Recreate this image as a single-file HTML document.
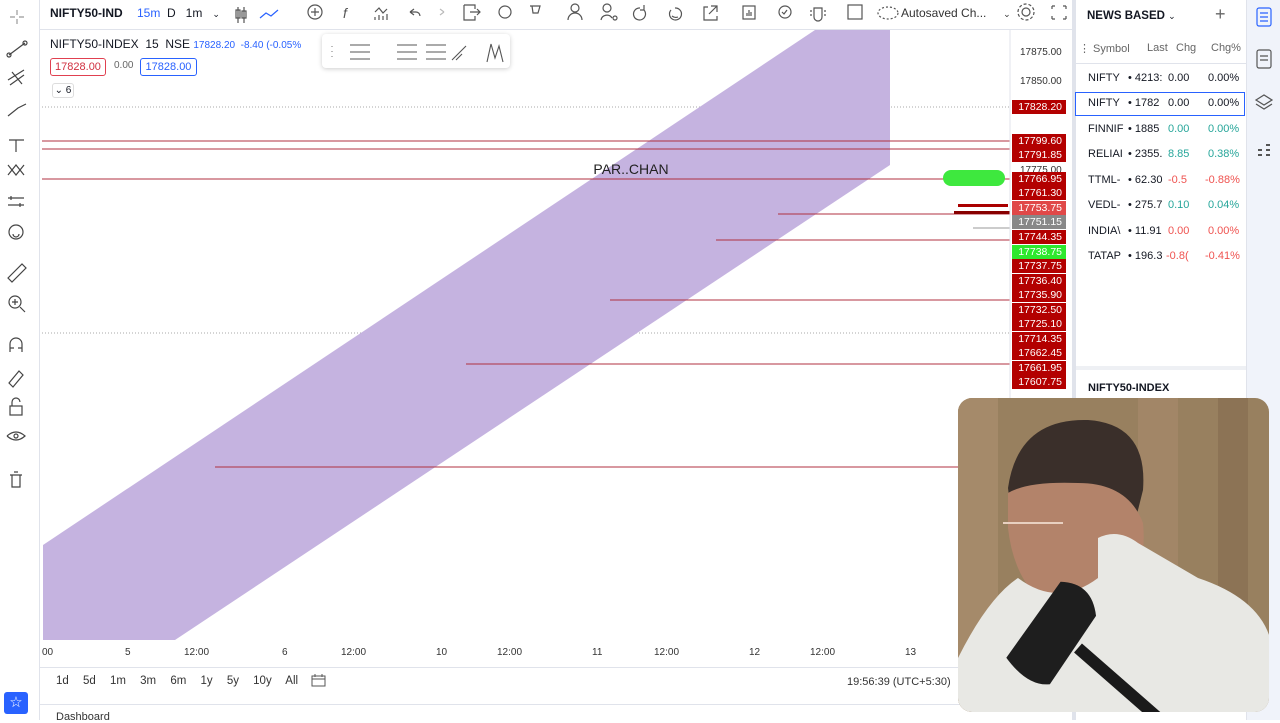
<!DOCTYPE html>
<html><head><meta charset="utf-8"><style>
*{margin:0;padding:0;box-sizing:border-box}
body{width:1280px;height:720px;overflow:hidden;background:#fff;font-family:"Liberation Sans",sans-serif;position:relative;color:#131722}
.a{position:absolute}
.pl{position:absolute;left:1012px;width:54px;height:14px;background:#b30000;color:#fff;font-size:10.5px;line-height:14px;text-align:right;padding-right:4px}
.wr{position:absolute;left:1088px;font-size:11px;height:25px;line-height:25px;width:155px}
.wr span{position:absolute}
</style></head><body>
<!-- top bar -->
<div class="a" style="left:0;top:0;width:1072px;height:30px;border-bottom:1px solid #e0e3eb;background:#fff"></div>
<div class="a" style="left:50px;top:6px;font-size:12px;font-weight:bold">NIFTY50-IND</div>
<div class="a" style="left:137px;top:6px;font-size:12px;color:#2962ff">15m</div>
<div class="a" style="left:167px;top:6px;font-size:12px">D&nbsp;&nbsp;&nbsp;1m&nbsp;&nbsp;&nbsp;<span style="font-size:9px">⌄</span></div>
<svg class="a" style="left:230px;top:0" width="850" height="30" fill="none" stroke="#555" stroke-width="1.2">
<path d="M8 7v16M14 7v16M6 10h4v8H6zM12 11h4v7h-4z"/><path d="M30 18l6-5 5 3 7-6" stroke="#2962ff"/>
<circle cx="85" cy="12" r="7"/><path d="M85 8v8M81 12h8"/>
<text x="113" y="18" font-size="14" fill="#555" stroke="none" font-style="italic">f</text>
<path d="M145 12l4-4 4 5 4-4M145 20v-3M149 20v-5M153 20v-4M157 20v-6"/>
<path d="M180 12l4-3M180 12l4 3M180 12h6a4 4 0 0 1 4 4"/><path d="M214 12l-4-3M214 12l-4 3" stroke="#bbb"/>
<path d="M234 5h11v4M234 5v15h11v-4M240 12h10M247 9l3 3-3 3"/>
<circle cx="275" cy="12" r="6"/><path d="M302 6h8l-2 7h-5zM300 6h2"/>
<circle cx="345" cy="8" r="4"/><path d="M338 20a7 7 0 0 1 14 0"/>
<circle cx="377" cy="8" r="4"/><path d="M371 20a6 6 0 0 1 11-2"/><circle cx="385" cy="18" r="2"/>
<path d="M410 8a6 6 0 1 0 4 2M414 5v5h-4"/><path d="M445 8a6 6 0 1 1-4 2M442 16a6 6 0 0 0 6 1"/>
<path d="M478 7h-4v13h13v-4M481 6h6v6M487 6l-8 8"/>
<rect x="513" y="6" width="12" height="13"/><path d="M517 16v-3M519 16v-6M521 16v-4"/>
<circle cx="555" cy="12" r="6"/><path d="M552 12l2 2 3-4"/>
<path d="M584 8h8v9a4 4 0 0 1-8 0zM582 11h-2M594 11h2M582 15h-2M594 15h2"/>
<rect x="618" y="5" width="14" height="14"/>
<ellipse cx="658" cy="13" rx="10" ry="6" stroke-dasharray="2 2"/>
<circle cx="796" cy="12" r="4"/><circle cx="796" cy="12" r="8" stroke-dasharray="3 2"/>
<path d="M822 6h3M822 6v3M836 6h-3M836 6v3M822 19h3M822 19v-3M836 19h-3M836 19v-3"/>
</svg>
<div class="a" style="left:901px;top:6px;font-size:12px;color:#333">Autosaved Ch...&nbsp;&nbsp;&nbsp;&nbsp;&nbsp;<span style="font-size:9px">⌄</span></div>
<!-- left toolbar -->
<div class="a" style="left:0;top:0;width:40px;height:720px;border-right:1px solid #e0e3eb;background:#fff"></div>
<svg class="a" style="left:0;top:0" width="40" height="500" fill="none" stroke="#444" stroke-width="1.2">
<path d="M17 10v5M17 19v5M10 17h5M19 17h5" stroke="#999"/>
<path d="M9 55l16-12"/><circle cx="9" cy="55" r="2"/><circle cx="25" cy="43" r="2"/>
<path d="M8 80l16-10M10 85l14-10M12 72l10 12"/>
<path d="M8 116l10-8 8-4"/><path d="M9 140h15M16 140v12"/>
<path d="M8 165l8 10 8-10M8 175l8-10 8 10"/><path d="M8 198h16M8 205h16M11 196v4M20 203v4"/>
<circle cx="16" cy="232" r="7"/><path d="M13 234a3 3 0 0 0 6 0"/>
<path d="M8 278l14-14 4 4-14 14z"/><circle cx="15" cy="302" r="6"/><path d="M20 307l5 5M12 302h6M15 299v6"/>
<path d="M10 352v-8a6 6 0 0 1 12 0v8M10 348h4M18 348h4"/><path d="M9 383l10-12 4 4-10 12z"/>
<rect x="10" y="406" width="12" height="9"/><path d="M12 406v-4a4 4 0 0 1 8 0"/>
<path d="M7 436q9-8 18 0q-9 8-18 0"/><circle cx="16" cy="436" r="2"/>
<path d="M10 475h12M12 475v12h8v-12M14 472h4"/>
</svg>
<div class="a" style="left:4px;top:692px;width:24px;height:22px;background:#2962ff;border-radius:3px;color:#fff;text-align:center;font-size:15px;line-height:22px">☆</div>
<!-- chart -->
<svg class="a" style="left:0;top:0" width="1072" height="650">
<line x1="42" y1="107" x2="1010" y2="107" stroke="#aaa" stroke-dasharray="1 2"/>
<line x1="42" y1="333" x2="1010" y2="333" stroke="#aaa" stroke-dasharray="1 2"/>
<polygon points="43,545 815,30 890,30 890,165 175,640 43,640" fill="#c5b3e0"/>
<g stroke="#b03040" stroke-width="1">
<line x1="42" y1="141" x2="1010" y2="141"/><line x1="42" y1="149" x2="1010" y2="149"/><line x1="42" y1="179" x2="1010" y2="179"/>
<line x1="778" y1="214" x2="1010" y2="214"/><line x1="716" y1="240" x2="1010" y2="240"/><line x1="610" y1="300" x2="1010" y2="300"/>
<line x1="466" y1="364" x2="1010" y2="364"/><line x1="215" y1="467" x2="960" y2="467"/>
</g>
<rect x="958" y="204" width="50" height="3" fill="#a00"/><rect x="954" y="211" width="56" height="3" fill="#800"/>
<line x1="973" y1="228" x2="1010" y2="228" stroke="#999"/>
<rect x="943" y="170" width="62" height="16" rx="8" fill="#3ee83e"/>
<text x="631" y="174" text-anchor="middle" font-size="14" fill="#222" font-family="Liberation Sans">PAR..CHAN</text>
<line x1="1010" y1="30" x2="1010" y2="640" stroke="#e0e3eb"/>
</svg>
<div class="a" style="left:50px;top:37px;font-size:12px">NIFTY50-INDEX&nbsp;&nbsp;15&nbsp;&nbsp;NSE <span style="font-size:10px;color:#2962ff">17828.20 &nbsp;-8.40 (-0.05%</span></div>
<div class="a" style="left:50px;top:58px;width:56px;height:18px;border:1px solid #e04050;border-radius:3px;color:#d03040;font-size:11px;line-height:16px;text-align:center">17828.00</div>
<div class="a" style="left:114px;top:60px;font-size:10px;color:#666">0.00</div>
<div class="a" style="left:140px;top:58px;width:57px;height:18px;border:1px solid #2962ff;border-radius:3px;color:#2962ff;font-size:11px;line-height:16px;text-align:center">17828.00</div>
<div class="a" style="left:52px;top:83px;width:22px;height:15px;border:1px solid #ddd;border-radius:3px;font-size:10px;line-height:13px;text-align:center">⌄ 6</div>
<div class="a" style="left:322px;top:34px;width:188px;height:34px;background:#fff;box-shadow:0 1px 5px rgba(0,0,0,.2);border-radius:4px"></div>
<svg class="a" style="left:322px;top:34px" width="188" height="34" fill="none" stroke="#555" stroke-width="1.1">
<path d="M10 12v1M10 17v1M10 22v1" stroke="#bbb" stroke-width="2"/>
<path d="M28 11h20M28 18h20M28 25h20M75 11h20M75 18h20M75 25h20M104 11h20M104 18h20M104 25h20"/>
<path d="M130 26l14-14M134 26l6-6"/><path d="M165 28l4-18 4 14 4-12 4 16"/>
</svg>
<div class="a" style="left:1020px;top:47px;font-size:10px;color:#333">17875.00</div>
<div class="a" style="left:1020px;top:76px;font-size:10px;color:#333">17850.00</div>
<div class="a" style="left:1020px;top:165px;font-size:10px;color:#333">17775.00</div>
<div class="pl" style="top:100px">17828.20</div>
<div class="pl" style="top:134px">17799.60</div>
<div class="pl" style="top:148px">17791.85</div>
<div class="pl" style="top:172px">17766.95</div>
<div class="pl" style="top:186px">17761.30</div>
<div class="pl" style="top:201px;background:#e04848">17753.75</div>
<div class="pl" style="top:215px;background:#888">17751.15</div>
<div class="pl" style="top:230px">17744.35</div>
<div class="pl" style="top:245px;background:#2ee82e">17738.75</div>
<div class="pl" style="top:259px">17737.75</div>
<div class="pl" style="top:274px">17736.40</div>
<div class="pl" style="top:288px">17735.90</div>
<div class="pl" style="top:303px">17732.50</div>
<div class="pl" style="top:317px">17725.10</div>
<div class="pl" style="top:332px">17714.35</div>
<div class="pl" style="top:346px">17662.45</div>
<div class="pl" style="top:361px">17661.95</div>
<div class="pl" style="top:375px">17607.75</div>
<!-- time axis -->
<div class="a" style="left:0;top:647px;width:960px;font-size:10px;color:#333">
<span class="a" style="left:42px">00</span><span class="a" style="left:125px">5</span><span class="a" style="left:184px">12:00</span><span class="a" style="left:282px">6</span><span class="a" style="left:341px">12:00</span><span class="a" style="left:436px">10</span><span class="a" style="left:497px">12:00</span><span class="a" style="left:592px">11</span><span class="a" style="left:654px">12:00</span><span class="a" style="left:749px">12</span><span class="a" style="left:810px">12:00</span><span class="a" style="left:905px">13</span></div>
<div class="a" style="left:40px;top:667px;width:920px;border-top:1px solid #e0e3eb"></div>
<div class="a" style="left:56px;top:675px;font-size:11.5px;word-spacing:11px;color:#333">1d 5d 1m 3m 6m 1y 5y 10y All</div>
<svg class="a" style="left:311px;top:674px" width="16" height="14" fill="none" stroke="#555"><rect x="1" y="2" width="13" height="10"/><path d="M1 5h13M4 0v3M11 0v3"/></svg>
<div class="a" style="left:847px;top:676px;font-size:11px;color:#333">19:56:39 (UTC+5:30)</div>
<div class="a" style="left:40px;top:704px;width:920px;border-top:1px solid #e0e3eb"></div>
<div class="a" style="left:56px;top:711px;font-size:11px;color:#333">Dashboard</div>
<!-- right panel -->
<div class="a" style="left:1072px;top:0;width:4px;height:720px;background:#e0e3eb"></div>
<div class="a" style="left:1087px;top:10px;font-size:11.5px;font-weight:bold">NEWS BASED <span style="font-weight:normal;font-size:9px">⌄</span></div>
<div class="a" style="left:1215px;top:4px;font-size:18px;color:#666;font-weight:300">+</div>
<div class="a" style="left:1079px;top:42px;font-size:11px;color:#666">⋮ Symbol<span style="position:absolute;left:68px">Last</span><span style="position:absolute;left:97px">Chg</span><span style="position:absolute;left:132px">Chg%</span></div>
<div class="a" style="left:1076px;top:63px;width:170px;border-top:1px solid #e0e3eb"></div>
<div class="a" style="left:1075px;top:92px;width:170px;height:24px;border:1.5px solid #2962ff"></div>
<div class="wr" style="top:66px"><span>NIFTY</span><span style="left:40px">• 4213:</span><span style="left:80px">0.00</span><span style="left:120px">0.00%</span></div>
<div class="wr" style="top:91px"><span>NIFTY</span><span style="left:40px">• 1782&nbsp;</span><span style="left:80px">0.00</span><span style="left:120px">0.00%</span></div>
<div class="wr" style="top:117px"><span>FINNIF</span><span style="left:40px">• 1885</span><span style="left:80px;color:#26a69a">0.00</span><span style="left:120px;color:#26a69a">0.00%</span></div>
<div class="wr" style="top:142px"><span>RELIAI</span><span style="left:40px">• 2355.</span><span style="left:80px;color:#26a69a">8.85</span><span style="left:120px;color:#26a69a">0.38%</span></div>
<div class="wr" style="top:168px"><span>TTML-</span><span style="left:40px">• 62.30</span><span style="left:80px;color:#ef5350">-0.5</span><span style="left:117px;color:#ef5350">-0.88%</span></div>
<div class="wr" style="top:193px"><span>VEDL-</span><span style="left:40px">• 275.7</span><span style="left:80px;color:#26a69a">0.10</span><span style="left:120px;color:#26a69a">0.04%</span></div>
<div class="wr" style="top:219px"><span>INDIA\</span><span style="left:40px">• 11.91</span><span style="left:80px;color:#ef5350">0.00</span><span style="left:120px;color:#ef5350">0.00%</span></div>
<div class="wr" style="top:244px"><span>TATAP</span><span style="left:40px">• 196.3</span><span style="left:78px;color:#ef5350">-0.8(</span><span style="left:117px;color:#ef5350">-0.41%</span></div>
<div class="a" style="left:1076px;top:366px;width:170px;height:4px;background:#eef0f4"></div>
<div class="a" style="left:1088px;top:382px;font-size:11px;font-weight:bold">NIFTY50-INDEX</div>
<div class="a" style="left:1246px;top:0;width:34px;height:720px;background:#f0f3fa;border-left:1px solid #e0e3eb"></div>
<svg class="a" style="left:1248px;top:0" width="32" height="170" fill="none" stroke="#2962ff" stroke-width="1.2">
<rect x="9" y="8" width="14" height="18" rx="2"/><path d="M12 13h8M12 17h8M12 21h8"/>
<rect x="9" y="50" width="14" height="18" rx="2" stroke="#555"/><path d="M12 56h8M12 60h8" stroke="#555"/>
<path d="M8 100l8-5 8 5-8 5zM8 104l8 5 8-5" stroke="#555"/>
<path d="M10 150h4M10 155h4M18 145h4M18 150h4M18 155h4" stroke="#555" stroke-width="2"/>
</svg>
<!-- webcam -->
<svg class="a" style="left:958px;top:398px" width="312" height="316">
<defs><clipPath id="c"><rect x="0" y="0" width="311" height="314" rx="14"/></clipPath></defs>
<g clip-path="url(#c)">
<rect width="312" height="316" fill="#98805f"/>
<rect x="0" y="0" width="40" height="316" fill="#a58a6a"/><rect x="180" y="0" width="40" height="316" fill="#a28667"/><rect x="260" y="0" width="30" height="316" fill="#8c7355"/>
<path d="M50 90q10-70 80-68q60 4 55 70l-10 40h-120z" fill="#3a2f2a"/>
<path d="M50 95q20-12 70-10q50 0 65 40q5 50-25 80q-40 15-80-5q-25-25-30-70z" fill="#b3836a"/>
<path d="M45 125h60" stroke="#e8d0c0" stroke-width="2"/>
<path d="M140 140q20-10 40 5l60 35q60 20 72 60v80h-312v-60q30-60 60-80q40 30 80 0z" fill="#e8e8e4"/>
<path d="M90 185q30-10 45 20l-20 80q-20 10-50-10z" fill="#1e1e1e" transform="rotate(20 100 220)"/>
<path d="M120 250l80 70" stroke="#1a1a1a" stroke-width="12"/>
</g></svg>
</body></html>
